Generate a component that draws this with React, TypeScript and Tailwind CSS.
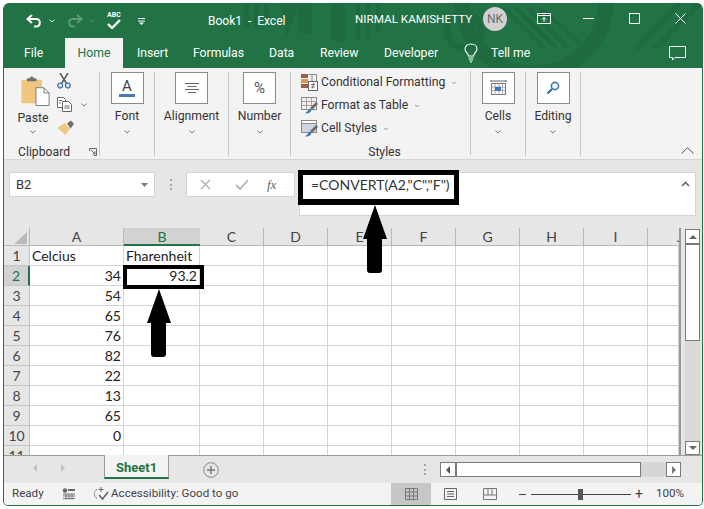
import React from "react";

const Chevron = ({ className = "" }: { className?: string }) => (
  <svg viewBox="0 0 7 4" className={`w-[6px] h-[4px] ${className}`}>
    <path d="M0.5 0.5L3.5 3L6.5 0.5" fill="none" stroke="#666" strokeWidth="1" />
  </svg>
);

const Bulb = () => (
  <svg viewBox="0 0 14 20" className="w-[14px] h-[20px] ml-[2px]">
    <path d="M4.5 13C4 10 1 9 1 6C1 3 3.5 1 7 1C10.5 1 13 3 13 6C13 9 10 10 9.5 13Z" fill="none" stroke="#fff" strokeWidth="1.1" />
    <path d="M4.5 15H9.5M5 17H9M6 19H8" stroke="#fff" strokeWidth="1.1" />
  </svg>
);

const TitleTexture = () => (
  <svg viewBox="0 0 698 65" className="absolute left-0 top-0 w-[698px] h-[65px]">
    <g fill="#1f6a41">
      <rect x="240" y="0" width="5" height="26" />
      <rect x="250" y="0" width="5" height="26" />
      <rect x="260" y="0" width="5" height="22" />
      <rect x="294" y="0" width="14" height="30" />
      <polygon points="276,0 286,0 296,0 282,34" />
      <rect x="327" y="0" width="14" height="38" />
      <rect x="352" y="0" width="4" height="38" />
      <rect x="362" y="0" width="4" height="36" />
      <rect x="372" y="0" width="4" height="30" />
    </g>
    <g fill="none" stroke="#1f6a41">
      <circle cx="460" cy="28" r="17" strokeWidth="7" />
      <circle cx="530" cy="-2" r="72" strokeWidth="15" />
      <path d="M500 5L540 45M512 5L552 45M524 5L564 45M536 5L576 40" strokeWidth="4" />
      <path d="M632 46L676 0M650 46L696 0" strokeWidth="6" />
    </g>
  </svg>
);

const TitleBar = () => (
  <div className="relative flex items-center h-[35px] text-white">
    <svg viewBox="0 0 16 14" className="ml-[22px] w-[16px] h-[14px]">
      <path d="M6 1L1.5 5L6 9M2 5H10.5C15 5 15 12.5 10 12.5H8" fill="none" stroke="#fff" strokeWidth="2" />
    </svg>
    <Chevron className="ml-[7px] [&_path]:stroke-white" />
    <svg viewBox="0 0 16 14" className="ml-[12px] w-[16px] h-[14px]">
      <path d="M10 1L14.5 5L10 9M14 5H5.5C1 5 1 12.5 6 12.5H8" fill="none" stroke="#5d9a79" strokeWidth="2" />
    </svg>
    <Chevron className="ml-[6px] [&_path]:stroke-[#5d9a79]" />
    <div className="ml-[11px] w-[16px] h-[20px] flex flex-col items-center">
      <span className="text-[7px] leading-[8px] font-bold">ABC</span>
      <svg viewBox="0 0 14 10" className="w-[14px] h-[10px]">
        <path d="M1 5L5 9L13 1" fill="none" stroke="#fff" strokeWidth="2.4" />
      </svg>
    </div>
    <svg viewBox="0 0 7 8" className="ml-[16px] w-[7px] h-[8px]">
      <path d="M0 1.5H7M0 4H7" stroke="#fff" strokeWidth="1" />
      <path d="M1 5.5H6L3.5 8Z" fill="#fff" />
    </svg>
    <span className="ml-[63px] w-[147px] text-[12px] whitespace-pre">Book1  -  Excel</span>
    <span className="text-[11.7px] whitespace-nowrap w-[128px] -mt-[2px]">NIRMAL KAMISHETTY</span>
    <div className="w-[24px] h-[24px] rounded-full bg-[#d3d0d1] text-[#6b6b6b] text-[12px] flex items-center justify-center -mt-[4px]">NK</div>
    <svg viewBox="0 0 14 11" className="ml-[30px] w-[14px] h-[11px] -mt-[4px]">
      <path d="M0.5 0.5H13.5V10.5H0.5ZM0.5 2.5H13.5" fill="none" stroke="#fff" />
      <path d="M7 9V4.5M5 6.5L7 4.5L9 6.5" fill="none" stroke="#fff" />
    </svg>
    <div className="ml-[32px] w-[11px] h-px bg-white -mt-[4px]" />
    <div className="ml-[35px] w-[11px] h-[11px] border border-white -mt-[4px]" />
    <svg viewBox="0 0 11 11" className="ml-[35px] w-[11px] h-[11px] -mt-[4px]">
      <path d="M0.5 0.5L10.5 10.5M10.5 0.5L0.5 10.5" stroke="#fff" />
    </svg>
  </div>
);

const TabBar = () => (
  <div className="relative flex items-center h-[30px] text-[12.2px] text-white">
    <span className="ml-[20px] w-[41px]">File</span>
    <span className="w-[58px] h-full bg-[#f3f3f3] text-[#217346] flex items-center justify-center">Home</span>
    <span className="ml-[14px] w-[56px]">Insert</span>
    <span className="w-[76px]">Formulas</span>
    <span className="w-[51px]">Data</span>
    <span className="w-[64px]">Review</span>
    <span className="w-[78px]">Developer</span>
    <Bulb />
    <span className="ml-[13px] flex-1">Tell me</span>
    <svg viewBox="0 0 17 15" className="mr-[16px] w-[17px] h-[15px]">
      <path d="M0.5 0.5H16.5V11.5H6L3.5 14V11.5H0.5Z" fill="none" stroke="#fff" />
    </svg>
  </div>
);

const BigButton = ({ label, children }: { label: string; children: React.ReactNode }) => (
  <div className="flex flex-col items-center h-[84px] border-r border-[#c6c6c6]">
    <div className="w-[33px] h-[32px] bg-white border border-[#8a8a8a] flex items-center justify-center">{children}</div>
    <span className="mt-[3px] leading-[18px]">{label}</span>
    <Chevron className="mt-[5px]" />
  </div>
);

const PasteIcon = () => (
  <svg viewBox="0 0 30 32" className="w-[29px] h-[30px]">
    <rect x="0" y="4" width="22" height="25" rx="1.5" fill="#eec67f" />
    <path d="M6 5.5H16V2.5H13C13 0 9 0 9 2.5H6Z" fill="#6f6f6f" />
    <path d="M15.5 12.5H24L29.5 18V31.5H15.5Z" fill="#fff" stroke="#767676" />
    <path d="M24 12.5V18H29.5" fill="none" stroke="#767676" />
  </svg>
);

const Scissors = () => (
  <svg viewBox="0 0 14 16" className="w-[14px] h-[16px]">
    <path d="M3 0L9.5 10.5M11 0L4.5 10.5" stroke="#5a5a5a" strokeWidth="1.5" />
    <circle cx="3.2" cy="12.6" r="2.4" fill="none" stroke="#3d79b5" strokeWidth="1.3" />
    <circle cx="10.8" cy="12.6" r="2.4" fill="none" stroke="#3d79b5" strokeWidth="1.3" />
  </svg>
);

const CopyIcon = () => (
  <svg viewBox="0 0 15 15" className="w-[15px] h-[15px]">
    <path d="M0.5 0.5H6.5L8.5 2.5V10.5H0.5Z" fill="#fff" stroke="#666" />
    <path d="M5.5 4.5H11.5L14.5 7.5V14.5H5.5Z" fill="#fff" stroke="#666" />
    <path d="M2 3.5H5M2 6H4M7.5 9H12.5M7.5 11H12.5" stroke="#666" />
  </svg>
);

const Painter = () => (
  <svg viewBox="0 0 18 15" className="w-[18px] h-[15px]">
    <path d="M0 8L8 3L13 9L8 15C6 12 3 10 0 8Z" fill="#efc77f" />
    <path d="M10 3.5L14 0.5L17 4L13.5 8.5Z" fill="#707070" />
  </svg>
);

const CondIcon = () => (
  <svg viewBox="0 0 17 17" className="w-[17px] h-[17px] shrink-0">
    <rect x="0" y="0" width="7" height="4" fill="#a65a4a" />
    <rect x="0" y="5" width="7" height="4" fill="#d89a50" />
    <rect x="0" y="10" width="7" height="4" fill="#a65a4a" />
    <path d="M7.5 0.5H15.5V7M11 0.5V7" fill="none" stroke="#888" />
    <rect x="7.5" y="7.5" width="9" height="9" fill="#fff" stroke="#666" />
    <path d="M10 10.5H14M10 13H14M13 9L11 14.5" stroke="#555" strokeWidth="0.8" />
  </svg>
);

const TableIcon = ({ styled }: { styled?: boolean }) => (
  <svg viewBox="0 0 17 17" className="w-[17px] h-[17px] shrink-0">
    <rect x="0.5" y="0.5" width="15" height="12" fill={styled ? "#cfd6e2" : "#f6f0ee"} stroke="#8a8a8a" />
    {!styled && <path d="M0.5 4.5H15.5M0.5 8.5H15.5M5.5 0.5V12.5M10.5 0.5V12.5" stroke="#a8a0a0" />}
    {styled && <rect x="0.5" y="0.5" width="15" height="3" fill="#fff" stroke="#8a8a8a" />}
    <path d="M15 5L17 7L11 13L9 11Z" fill="#6d6d6d" />
    <path d="M8.5 11.5L10.5 13.5C9 16.5 6 16.5 4 16.5C6 15 7 13.5 8.5 11.5Z" fill="#3d79b5" />
  </svg>
);

const StyleRow = ({ icon, label }: { icon: React.ReactNode; label: string }) => (
  <div className="flex items-center gap-[3px] h-[23px] shrink-0">
    {icon}
    <span className="whitespace-nowrap">{label}</span>
    <Chevron className="ml-[3px] scale-75" />
  </div>
);

const Ribbon = () => (
  <div className="flex h-[92px] bg-[#f3f3f3] pt-[4px] text-[12.2px] text-[#333] border-b border-[#d6d6d6]">
    <div className="w-[96px] h-[84px] border-r border-[#c6c6c6] flex flex-col">
      <div className="flex h-[66px] pl-[13px]">
        <div className="w-[36px] flex flex-col items-center pt-[4px]">
          <PasteIcon />
          <span className="mt-[3px] leading-[18px] -ml-[4px]">Paste</span>
          <Chevron className="mt-[3px] -ml-[4px]" />
        </div>
        <div className="ml-[4px] flex flex-col pt-[1px] gap-[8px]">
          <Scissors />
          <div className="flex items-center">
            <CopyIcon />
            <Chevron className="ml-[9px]" />
          </div>
          <Painter />
        </div>
      </div>
      <div className="flex items-center pl-[14px] pr-[2px] mt-[9px]">
        <span className="flex-1 leading-[16px]">Clipboard</span>
        <svg viewBox="0 0 8 8" className="w-[8px] h-[8px]">
          <path d="M0.5 3V0.5H7.5V7.5H5M2 2L6 6M3.5 6H6V3.5" fill="none" stroke="#666" />
        </svg>
      </div>
    </div>
    <div className="w-[55px]">
      <BigButton label="Font">
        <div className="flex flex-col items-center">
          <span className="text-[15px] leading-[15px] text-[#444]">A</span>
          <div className="w-[16px] h-[3px] bg-[#4a7ab5]" />
        </div>
      </BigButton>
    </div>
    <div className="w-[74px]">
      <BigButton label="Alignment">
        <svg viewBox="0 0 14 10" className="w-[14px] h-[10px]">
          <path d="M0 0.5H14M2.5 3.5H11.5M0 6.5H14M3 9.5H11" stroke="#666" />
        </svg>
      </BigButton>
    </div>
    <div className="w-[62px]">
      <BigButton label="Number">
        <span className="text-[15px] text-[#555]">%</span>
      </BigButton>
    </div>
    <div className="w-[180px] h-[84px] border-r border-[#c6c6c6] pl-[10px] -mt-px flex flex-col">
      <StyleRow icon={<CondIcon />} label="Conditional Formatting" />
      <StyleRow icon={<TableIcon />} label="Format as Table" />
      <StyleRow icon={<TableIcon styled />} label="Cell Styles" />
      <span className="mt-[4px] text-center pr-[2px] leading-[16px]">Styles</span>
    </div>
    <div className="w-[55px]">
      <BigButton label="Cells">
        <svg viewBox="0 0 17 18" className="w-[17px] h-[18px]">
          <path d="M1 1V3M16 1V3M1 2H16" stroke="#666" />
          <rect x="1.5" y="4.5" width="14" height="11" fill="#fff" stroke="#777" />
          <path d="M1.5 8H15.5M1.5 11.5H15.5M5 4.5V15.5M9 4.5V15.5M12.5 4.5V15.5" stroke="#aaa" />
          <rect x="5" y="8" width="6" height="4" fill="#3d79b5" />
        </svg>
      </BigButton>
    </div>
    <div className="w-[55px]">
      <BigButton label="Editing">
        <svg viewBox="0 0 14 14" className="w-[14px] h-[14px]">
          <circle cx="9" cy="5" r="3.6" fill="none" stroke="#3d79b5" strokeWidth="1.6" />
          <path d="M6 8L1.5 12.5" stroke="#2f6ba8" strokeWidth="2.2" />
        </svg>
      </BigButton>
    </div>
    <div className="flex-1 flex items-end justify-end pr-[8px] pb-[5px]">
      <svg viewBox="0 0 13 7" className="w-[13px] h-[7px]">
        <path d="M0.5 6.5L6.5 0.8L12.5 6.5" fill="none" stroke="#555" />
      </svg>
    </div>
  </div>
);

const FormulaBar = () => (
  <div className="flex items-start h-[68px] bg-[#e6e6e6] pt-[12px] pl-[5px] text-[13px] text-[#333]">
    <div className="w-[146px] h-[25px] bg-white border border-[#d4d4d4] flex items-center pl-[6px] pr-[6px]">
      <span className="flex-1">B2</span>
      <svg viewBox="0 0 7 4" className="w-[7px] h-[4px]">
        <path d="M0 0H7L3.5 4Z" fill="#7a7a7a" />
      </svg>
    </div>
    <div className="ml-[15px] w-[2px] h-[11px] mt-[7px] border-l-2 border-dotted border-[#aaa]" />
    <div className="ml-[14px] w-[109px] h-[25px] bg-white border border-[#d4d4d4] flex items-center pl-[13px]">
      <svg viewBox="0 0 11 11" className="w-[11px] h-[11px]">
        <path d="M1 1L10 10M10 1L1 10" stroke="#b4b4b4" strokeWidth="1.5" />
      </svg>
      <svg viewBox="0 0 14 11" className="ml-[24px] w-[14px] h-[11px]">
        <path d="M1 6L5 10L13 1" fill="none" stroke="#b4b4b4" strokeWidth="1.8" />
      </svg>
      <span className="ml-[18px] font-['Liberation_Serif',serif] italic text-[13px] text-[#666]">fx</span>
    </div>
    <div className="ml-[4px] w-[397px] h-[44px] bg-white border border-[#d4d4d4] flex pl-[11px] pt-[3px] pr-[4px]">
      <span className="flex-1 leading-[18px] font-['Lato',sans-serif] text-[14px]">=CONVERT(A2,"C","F")</span>
      <svg viewBox="0 0 9 6" className="w-[9px] h-[6px] mt-[5px] mr-[1px]">
        <path d="M1 5L4.5 1.5L8 5" fill="none" stroke="#666" strokeWidth="1.6" />
      </svg>
    </div>
  </div>
);

const columns = ["A", "B", "C", "D", "E", "F", "G", "H", "I", "J"];
const rows: { a?: string; b?: string; num?: boolean }[] = [
  { a: "Celcius", b: "Fharenheit" },
  { a: "34", b: "93.2", num: true },
  { a: "54", num: true },
  { a: "65", num: true },
  { a: "76", num: true },
  { a: "82", num: true },
  { a: "22", num: true },
  { a: "13", num: true },
  { a: "65", num: true },
  { a: "0", num: true },
  {},
];

const Sheet = () => (
  <div className="h-[227px] w-[677px] overflow-hidden border-r-2 border-[#9a9a9a] bg-white text-[14px] text-[#222] font-['Lato',sans-serif]">
    <div className="grid grid-cols-[26px_94px_76px_repeat(7,64px)_31px] auto-rows-[20px] [grid-template-rows:18px]">
      <div className="bg-[#e6e6e6] border-r border-b border-[#b8b8b8] flex items-end justify-end pr-[2px] pb-[1px]">
        <div className="w-[13px] h-[12px] bg-[#b9b9b9] [clip-path:polygon(100%_0,100%_100%,0_100%)]" />
      </div>
      {columns.map((c) =>
        c === "B" ? (
          <div key={c} className="bg-[#d2d2d2] border-b-2 border-[#217346] text-[#217346] text-center leading-[17px]">{c}</div>
        ) : c === "J" ? (
          <div key={c} className="bg-[#e6e6e6] border-b border-[#b8b8b8] text-[#444] pl-[29px] overflow-hidden leading-[17px]">{c}</div>
        ) : (
          <div key={c} className="bg-[#e6e6e6] border-r border-b border-[#b8b8b8] text-[#444] text-center leading-[17px]">{c}</div>
        )
      )}
      {rows.map((row, i) => (
        <React.Fragment key={i}>
          <div className={i === 1
            ? "bg-[#d2d2d2] border-r-2 border-b border-r-[#217346] border-b-[#c4c4c4] text-[#217346] text-center leading-[20px]"
            : "bg-[#e6e6e6] border-r border-b border-[#c4c4c4] text-[#444] text-center leading-[20px]"}>
            {i + 1}
          </div>
          {columns.map((c) => {
            const value = c === "A" ? row.a : c === "B" ? row.b : undefined;
            return (
              <div key={c} className={`border-r border-b border-[#d4d4d4] leading-[20px] px-[2px] whitespace-nowrap ${row.num ? "text-right" : "text-left"}`}>
                {value}
              </div>
            );
          })}
        </React.Fragment>
      ))}
    </div>
  </div>
);

const ScrollV = () => (
  <div className="w-[21px] h-[227px] bg-[#e6e6e6] pl-[4px] pt-[1px]">
    <div className="w-[15px] h-[226px] bg-[#dadada] flex flex-col justify-between">
      <div>
        <div className="h-[15px] bg-white border border-[#7a7a7a] flex items-center justify-center">
          <div className="w-0 h-0 border-x-[4px] border-x-transparent border-b-[4px] border-b-[#666]" />
        </div>
        <div className="h-[98px] bg-white border-x border-b border-t-2 border-[#7a7a7a] -mt-px" />
      </div>
      <div className="h-[14px] bg-white border border-[#7a7a7a] flex items-center justify-center">
        <div className="w-0 h-0 border-x-[4px] border-x-transparent border-t-[4px] border-t-[#666]" />
      </div>
    </div>
  </div>
);

const TabStrip = () => (
  <div className="flex h-[28px] bg-[#e6e6e6] border-t border-[#9a9a9a]">
    <div className="flex items-center h-[23px] pl-[29px] w-[100px]">
      <div className="w-0 h-0 border-y-[4px] border-y-transparent border-r-[4px] border-r-[#c0c0c0]" />
      <div className="ml-[24px] w-0 h-0 border-y-[4px] border-y-transparent border-l-[4px] border-l-[#c0c0c0]" />
    </div>
    <div className="w-[65px] h-[24px] -mt-px bg-[#f3f3f3] border-x border-[#9a9a9a] border-b-2 border-b-[#217346] text-center text-[13px] font-bold text-[#217346] leading-[25px]">
      Sheet1
    </div>
    <svg viewBox="0 0 16 16" className="ml-[34px] mt-[6px] w-[16px] h-[16px]">
      <circle cx="8" cy="8" r="7.3" fill="none" stroke="#8a8a8a" />
      <path d="M8 4V12M4 8H12" stroke="#777" strokeWidth="1.4" />
    </svg>
    <div className="ml-[205px] mt-[8px] w-[2px] h-[11px] border-l-2 border-dotted border-[#aaa]" />
    <div className="ml-[14px] mt-[6px] flex w-[241px] h-[15px] bg-[#d6d6d6]">
      <div className="w-[16px] h-full bg-white border border-[#7a7a7a] flex items-center justify-center">
        <div className="w-0 h-0 border-y-[4px] border-y-transparent border-r-[4px] border-r-[#555]" />
      </div>
      <div className="w-[186px] h-full bg-white border border-l-2 border-[#7a7a7a] -ml-px" />
      <div className="flex-1" />
      <div className="w-[15px] h-full bg-white border border-[#7a7a7a] flex items-center justify-center">
        <div className="w-0 h-0 border-y-[4px] border-y-transparent border-l-[4px] border-l-[#777]" />
      </div>
    </div>
  </div>
);

const StatusBar = () => (
  <div className="flex items-center h-[22px] bg-[#f3f3f3] text-[11.6px] text-[#444]">
    <span className="ml-[8px] w-[50px]">Ready</span>
    <svg viewBox="0 0 13 12" className="w-[13px] h-[12px]">
      <circle cx="3" cy="2.5" r="2.2" fill="#666" />
      <path d="M6 1H13V3H6Z" fill="#666" />
      <path d="M1 6H13M1 8H13M1 10.5H13M4 6V11.5M7 6V11.5M10 6V11.5" stroke="#777" />
    </svg>
    <svg viewBox="0 0 16 14" className="ml-[18px] w-[16px] h-[14px]">
      <path d="M4 2.5C1 4 0 9 4 11.5" fill="none" stroke="#666" strokeDasharray="2 1" />
      <path d="M8 0V5M5.5 2.5H10.5" stroke="#666" />
      <path d="M6 8L9.5 12L15 5" fill="none" stroke="#666" strokeWidth="1.6" />
    </svg>
    <span className="ml-[2px] w-[280px] whitespace-nowrap">Accessibility: Good to go</span>
    <div className="w-[40px] h-full bg-[#c6c6c6] flex items-center justify-center">
      <svg viewBox="0 0 13 12" className="w-[13px] h-[12px]">
        <path d="M0.5 0.5H12.5V11.5H0.5ZM0.5 4H12.5M0.5 8H12.5M4.5 0.5V11.5M8.5 0.5V11.5" fill="none" stroke="#777" />
      </svg>
    </div>
    <svg viewBox="0 0 13 12" className="ml-[13px] w-[13px] h-[12px]">
      <path d="M0.5 0.5H12.5V11.5H0.5Z" fill="none" stroke="#666" />
      <path d="M3 3.5H10M3 6H10M3 8.5H10" stroke="#666" />
    </svg>
    <svg viewBox="0 0 14 12" className="ml-[26px] w-[14px] h-[12px]">
      <path d="M0.5 0.5H13.5V11.5H0.5ZM0.5 7H13.5M5 0.5V7M9 0.5V7" fill="none" stroke="#777" />
    </svg>
    <div className="ml-[22px] w-[7px] h-px bg-[#444]" />
    <div className="relative ml-[5px] w-[100px] h-px bg-[#444]">
      <div className="absolute left-[47px] -top-[5px] w-[5px] h-[11px] bg-[#555]" />
    </div>
    <span className="ml-[4px] text-[14px] leading-none">+</span>
    <span className="ml-[13px]">100%</span>
  </div>
);

const Arrow = ({ className }: { className: string }) => (
  <svg viewBox="0 0 26 68" className={`absolute w-[26px] h-[68px] ${className}`}>
    <path d="M13 0L25 34H20V65Q20 68 17 68H8Q5 68 5 65V34H1Z" fill="#000" />
  </svg>
);

export default function App() {
  return (
    <div className="relative w-[704px] h-[509px] bg-white pt-[3px] pl-[3px] overflow-hidden font-['Roboto',sans-serif]">
      <div className="w-[700px] h-[503px] rounded-t-[6px] rounded-b-[5px] border-x border-b border-[#217346] bg-[#f3f3f3] overflow-hidden">
        <div className="relative bg-[#217346]">
          <TitleTexture />
          <TitleBar />
          <TabBar />
        </div>
        <Ribbon />
        <FormulaBar />
        <div className="flex">
          <Sheet />
          <ScrollV />
        </div>
        <TabStrip />
        <StatusBar />
      </div>

      {/* annotations drawn on top of the screenshot */}
      <div className="absolute left-[298px] top-[170px] w-[161px] h-[35px] border-[5px] border-b-[6px] border-black" />
      <div className="absolute left-[123px] top-[265px] w-[81px] h-[24px] border-[4px] border-black" />
      <Arrow className="left-[362px] top-[205px]" />
      <Arrow className="left-[146px] top-[289px]" />
    </div>
  );
}
